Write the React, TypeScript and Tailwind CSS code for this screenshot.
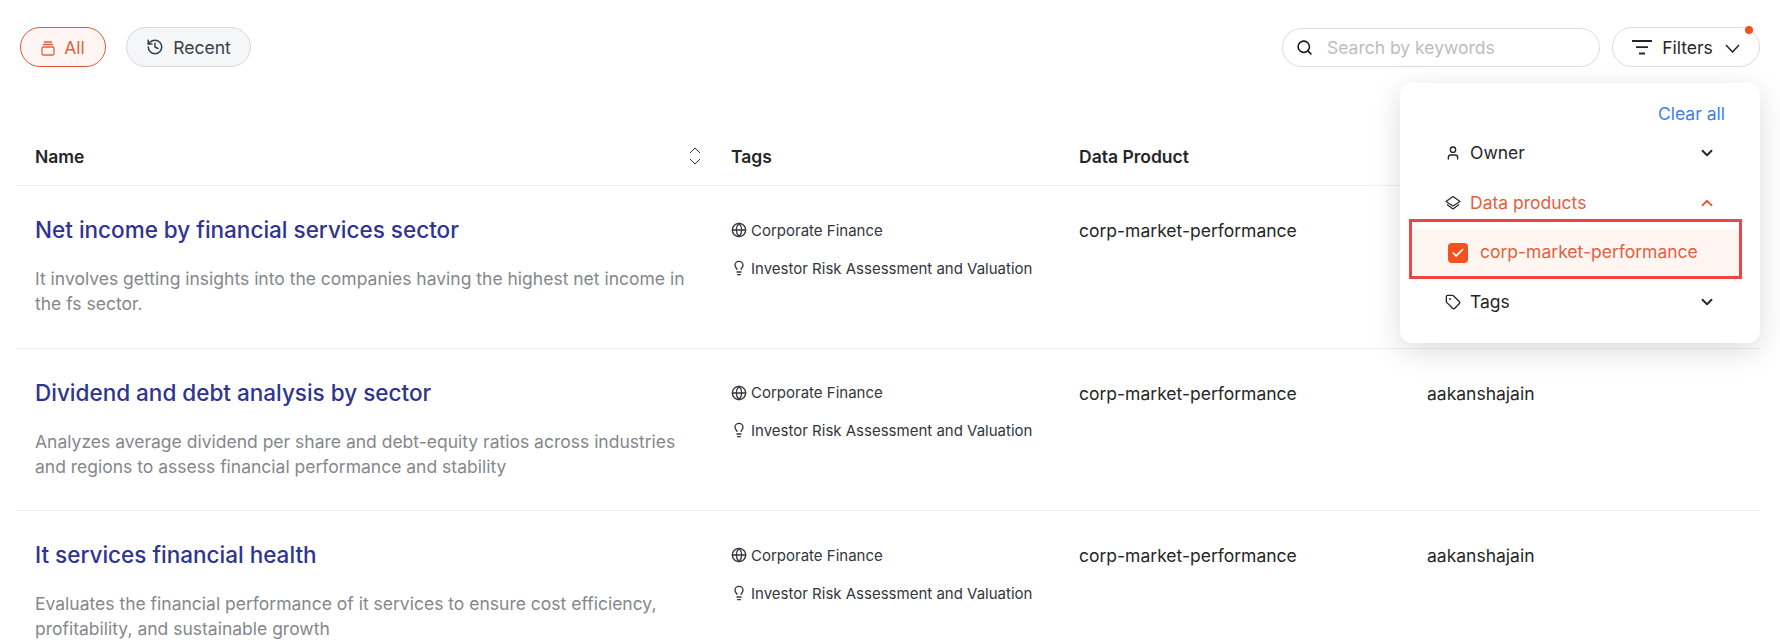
import { Check, ChevronDown, ChevronUp, Globe, Lightbulb, Search, Tag, User, History } from "lucide-react";

const rows = [
  {
    name: "Net income by financial services sector",
    desc: "It involves getting insights into the companies having the highest net income in the fs sector.",
    owner: "",
  },
  {
    name: "Dividend and debt analysis by sector",
    desc: "Analyzes average dividend per share and debt-equity ratios across industries and regions to assess financial performance and stability",
    owner: "aakanshajain",
  },
  {
    name: "It services financial health",
    desc: "Evaluates the financial performance of it services to ensure cost efficiency, profitability, and sustainable growth",
    owner: "aakanshajain",
  },
];

function AllIcon() {
  return (
    <svg width="14" height="15" viewBox="0 0 14 15" fill="none" stroke="currentColor" strokeWidth="1.3" className="mr-[9px]">
      <path d="M3 1h8M2 3.5h10" />
      <rect x="1" y="6" width="12" height="8" rx="1.5" />
    </svg>
  );
}

function SortIcon() {
  return (
    <svg width="14" height="20" viewBox="0 0 14 20" fill="none" stroke="#333" strokeWidth="1" className="-mt-[3px]">
      <path d="M2 7l5-5 5 5M2 13l5 5 5-5" />
    </svg>
  );
}

function FilterLines() {
  return (
    <svg width="20" height="15" viewBox="0 0 20 15" fill="none" stroke="#262626" strokeWidth="1.8" className="mr-[10px] -mt-[2px]">
      <path d="M0 1h20M4 7.2h12M7 13.5h6" />
    </svg>
  );
}

function LayersIcon() {
  return (
    <svg width="16" height="16" viewBox="0 0 16 16" fill="none" stroke="#262626" strokeWidth="1.2" strokeLinejoin="round" className="mr-[9px]">
      <path d="M8 1.5L15 6.5 8 11 1 6.5z" />
      <path d="M2 9.5L8 14l6-4.5" />
    </svg>
  );
}

function FilterDropdown() {
  return (
    <div className="absolute top-[83px] right-[20px] w-[360px] h-[260px] bg-white rounded-xl shadow-[0_8px_30px_rgba(0,0,0,0.14)] pt-[21px] z-10">
      <div className="text-right pr-[35px] text-[17.5px] leading-[20px] text-[#3b7ee8]">Clear all</div>
      <div className="flex items-center h-[24px] mt-[17px] pl-[45px] pr-[44px] text-[17.5px] text-[#262626]">
        <User size={16} className="mr-[9px]" />
        <span className="flex-1">Owner</span>
        <ChevronDown size={18} strokeWidth={2.5} />
      </div>
      <div className="flex items-center h-[24px] mt-[26px] pl-[45px] pr-[44px] text-[17.5px] text-[#e2603f]">
        <LayersIcon />
        <span className="flex-1">Data products</span>
        <ChevronUp size={18} strokeWidth={2.5} />
      </div>
      <div className="mt-[4px] ml-[9px] h-[60px] w-[333px] border-[3px] border-[#ef4444] flex items-end">
        <div className="w-full h-[47px] bg-[#fff6f2] flex items-center pl-[36px] text-[17.5px] text-[#e2603f]">
          <span className="w-[20px] h-[20px] rounded-[4px] bg-[#f4511e] flex items-center justify-center mr-[12px]">
            <Check size={14} strokeWidth={3} className="text-white" />
          </span>
          corp-market-performance
        </div>
      </div>
      <div className="flex items-center h-[24px] mt-[11px] pl-[45px] pr-[44px] text-[17.5px] text-[#262626]">
        <Tag size={16} className="mr-[9px]" />
        <span className="flex-1">Tags</span>
        <ChevronDown size={18} strokeWidth={2.5} />
      </div>
    </div>
  );
}

export default function App() {
  return (
    <div className="relative w-[1780px] h-[644px] overflow-hidden bg-white font-['Inter',sans-serif]">
      <div className="flex items-center justify-between px-[20px] pt-[27px]">
        <div className="flex items-center gap-[20px]">
          <button className="flex items-center h-[40px] w-[86px] pt-[2px] justify-center rounded-full border border-[#e0583a] bg-[#fff6f3] text-[17.5px] text-[#e2603f]">
            <AllIcon />
            All
          </button>
          <button className="flex items-center h-[40px] w-[125px] pt-[2px] justify-center rounded-full border border-[#d9d9d9] bg-[#f5f6f8] text-[17.5px] text-[#3a3d45]">
            <History size={18} className="mr-[9px] -mt-[2px]" />
            Recent
          </button>
        </div>
        <div className="flex items-center gap-[12px]">
          <div className="flex items-center h-[39px] w-[318px] pt-[2px] rounded-full border border-[#dddddd] pl-[13px]">
            <Search size={17} strokeWidth={2.2} className="text-[#111] mr-[14px] -mt-[2px]" />
            <span className="text-[17.5px] text-[#bdbdbd]">Search by keywords</span>
          </div>
          <button className="relative flex items-center justify-center h-[40px] w-[148px] pt-[2px] rounded-full border border-[#dddddd] text-[17.5px] text-[#262626]">
            <FilterLines />
            Filters
            <svg width="15" height="9" viewBox="0 0 15 9" fill="none" stroke="#262626" strokeWidth="1.5" className="ml-[12px]">
              <path d="M1 1l6.5 7L14 1" />
            </svg>
            <span className="absolute -top-[2px] right-[6px] w-[8px] h-[8px] rounded-full bg-[#f4511e]" />
          </button>
        </div>
      </div>

      <div className="mx-[16px] mt-[56px] w-[1744px]">
        <div className="grid grid-cols-[696px_348px_348px_352px] h-[63px] pt-[6px] items-center border-b border-[#eeeeee] text-[17.5px] font-semibold text-[#262626]">
          <div className="flex items-center justify-between pl-[19px] pr-[10px]">
            <span>Name</span>
            <SortIcon />
          </div>
          <div className="pl-[19px]">Tags</div>
          <div className="pl-[19px]">Data Product</div>
        </div>
        {rows.map((row) => (
          <div key={row.name} className="grid grid-cols-[696px_348px_348px_352px] h-[162.5px] border-b border-[#eeeeee] pt-[29px]">
            <div className="pl-[19px] pr-[25px]">
              <div className="text-[22.5px] leading-[30px] font-medium text-[#2f3490]">{row.name}</div>
              <div className="mt-[21px] text-[17.5px] leading-[25px] text-[#85878c]">{row.desc}</div>
            </div>
            <div className="pl-[19px] text-[15px] text-[#33363d]">
              <div className="flex items-center h-[24px] mt-[4px]">
                <Globe size={16} className="mr-[4px] -mt-[2px]" />
                Corporate Finance
              </div>
              <div className="flex items-center h-[24px] mt-[14px]">
                <Lightbulb size={16} className="mr-[4px] -mt-[3px]" />
                Investor Risk Assessment and Valuation
              </div>
            </div>
            <div className="pl-[19px] text-[17.5px] leading-[24px] text-[#262626] mt-[4px]">corp-market-performance</div>
            <div className="pl-[19px] text-[17.5px] leading-[24px] text-[#262626] mt-[4px]">{row.owner}</div>
          </div>
        ))}
      </div>

      <FilterDropdown />
    </div>
  );
}
